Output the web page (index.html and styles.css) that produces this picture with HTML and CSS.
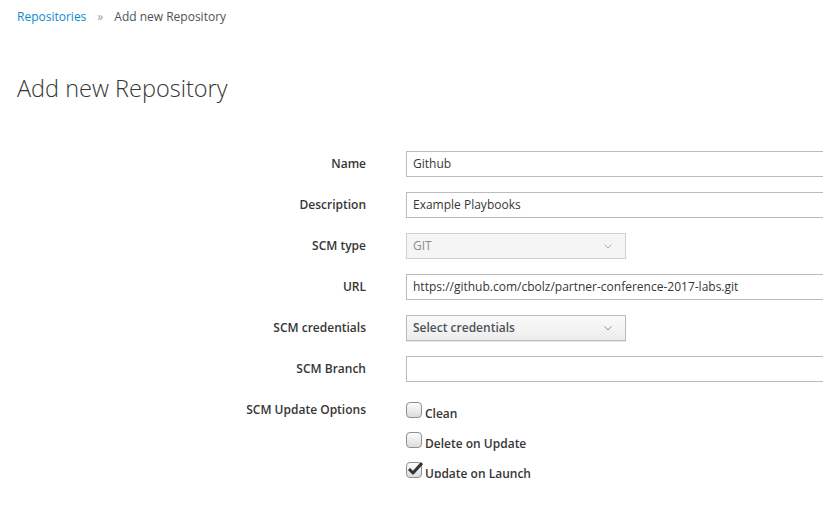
FILE: index.html
```html
<!DOCTYPE html>
<html>
<head>
<meta charset="utf-8">
<link rel="stylesheet" href="styles.css">
</head>
<body>
<div class="page">
  <nav class="breadcrumb">
    <a class="crumb-link">Repositories</a>
    <span class="crumb-sep">»</span>
    <span class="crumb-current">Add new Repository</span>
  </nav>
  <h1 class="title">Add new Repository</h1>
  <form class="form">
    <div class="row">
      <label class="label">Name</label>
      <div class="field"><div class="input">Github</div></div>
    </div>
    <div class="row">
      <label class="label">Description</label>
      <div class="field"><div class="input">Example Playbooks</div></div>
    </div>
    <div class="row">
      <label class="label">SCM type</label>
      <div class="field"><div class="select disabled"><span>GIT</span><svg class="chev" width="8" height="5" viewBox="0 0 8 5"><path d="M0.5 0.5 L4 4 L7.5 0.5" fill="none" stroke="currentColor" stroke-width="1"/></svg></div></div>
    </div>
    <div class="row">
      <label class="label">URL</label>
      <div class="field"><div class="input">https://github.com/cbolz/partner-conference-2017-labs.git</div></div>
    </div>
    <div class="row">
      <label class="label">SCM credentials</label>
      <div class="field"><div class="select"><span>Select credentials</span><svg class="chev" width="8" height="5" viewBox="0 0 8 5"><path d="M0.5 0.5 L4 4 L7.5 0.5" fill="none" stroke="currentColor" stroke-width="1"/></svg></div></div>
    </div>
    <div class="row">
      <label class="label">SCM Branch</label>
      <div class="field"><div class="input"></div></div>
    </div>
    <div class="row options">
      <label class="label">SCM Update Options</label>
      <div class="checks">
        <div class="check"><span class="box"></span><span class="check-text">Clean</span></div>
        <div class="check"><span class="box"></span><span class="check-text">Delete on Update</span></div>
        <div class="check"><span class="box checked"><svg width="16" height="14" viewBox="0 0 16 14"><path d="M2 7 L6 11 L15 1" fill="none" stroke="#333" stroke-width="3" stroke-linejoin="round"/></svg></span><span class="check-text">Update on Launch</span></div>
      </div>
    </div>
  </form>
</div>
</body>
</html>
```
FILE: styles.css
```css
html, body {
  margin: 0;
  padding: 0;
  background: #fff;
}
body {
  font-family: "Open Sans", "Liberation Sans", sans-serif;
  font-size: 12px;
  color: #363636;
  overflow: hidden;
}
.page {
  padding: 7px 0 0 17px;
}
.breadcrumb {
  display: flex;
  align-items: center;
  height: 20px;
  line-height: 20px;
}
.crumb-link {
  color: #0a8bcf;
}
.crumb-sep {
  color: #9c9c9c;
  margin: 0 11px 0 11px;
}
.crumb-current {
  color: #4d5258;
}
.title {
  font-weight: 300;
  font-size: 23.5px;
  line-height: 30px;
  margin: 46px 0 0 0;
  color: #363636;
}
.form {
  margin-top: 48px;
  display: flex;
  flex-direction: column;
  gap: 15px;
}
.row {
  display: flex;
  align-items: flex-start;
}
.label {
  width: 349px;
  text-align: right;
  font-weight: 600;
  line-height: 26px;
  flex-shrink: 0;
}
.field {
  margin-left: 40px;
  flex: 1;
  min-width: 0;
}
.input {
  box-sizing: border-box;
  height: 26px;
  width: 440px;
  border: 1px solid #bbb;
  padding: 0 6px;
  line-height: 24px;
  color: #363636;
  white-space: nowrap;
  background: #fff;
}
.select {
  box-sizing: border-box;
  height: 26px;
  width: 220px;
  border: 1px solid #bbb;
  padding: 0 13px 0 6px;
  line-height: 24px;
  display: flex;
  align-items: center;
  justify-content: space-between;
  background: linear-gradient(#fafafa, #ededed);
  box-shadow: 0 1px 1px rgba(3, 3, 3, 0.08);
  font-weight: 600;
  color: #4d5258;
}
.select .chev {
  color: #8b8d8f;
}
.select.disabled {
  background: #f5f5f5;
  border-color: #d1d1d1;
  box-shadow: none;
  font-weight: 400;
  color: #8b8d8f;
}
.select.disabled .chev {
  color: #b0b0b0;
}
.checks {
  margin-left: 40px;
  padding-top: 5px;
  display: flex;
  flex-direction: column;
  gap: 14px;
}
.check {
  display: flex;
  align-items: flex-end;
  height: 16px;
}
.box {
  position: relative;
  box-sizing: border-box;
  width: 16px;
  height: 16px;
  border: 1px solid #8e8e8e;
  border-radius: 4px;
  background: linear-gradient(#fdfdfd, #dcdcdc);
  flex-shrink: 0;
}
.box svg {
  position: absolute;
  left: 0;
  top: -1px;
}
.check-text {
  margin-left: 3px;
  font-weight: 600;
  line-height: 14px;
  position: relative;
  top: 3px;
}
```
